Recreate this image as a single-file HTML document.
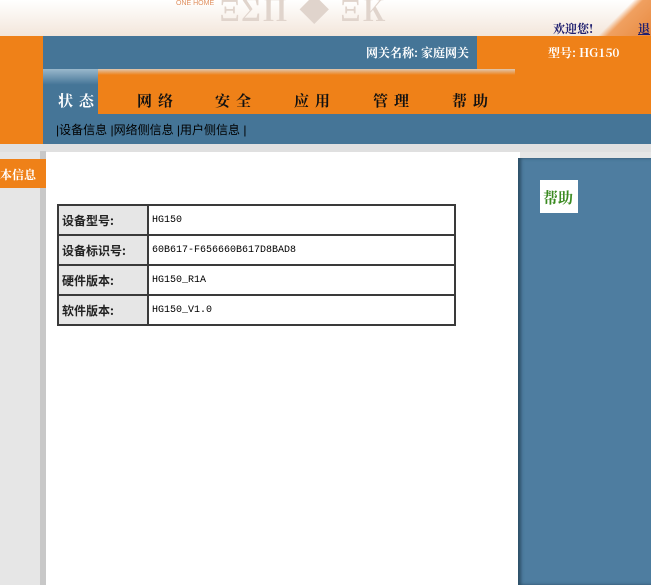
<!DOCTYPE html>
<html><head><meta charset="utf-8"><style>
body{margin:0;width:651px;height:585px;overflow:hidden;background:#e6e6e6;font-family:"Liberation Sans","Noto Sans CJK SC",sans-serif;position:relative}
div{position:absolute;box-sizing:border-box}
.t{font-family:"Noto Serif CJK SC","Liberation Serif",serif;font-weight:bold}
table{border-collapse:collapse;position:absolute;left:57px;top:204px;width:399px}
tr{height:30px}
td{border:2px solid #3a3a3a;font-size:10px;font-family:"Liberation Mono","Noto Sans CJK SC",monospace;padding:0 0 0 3px}
td.l{background:#e6e6e6;width:85px;font-size:12px;font-family:"Noto Sans CJK SC",sans-serif;font-weight:bold;color:#222}
</style></head><body>
<div style="left:0;top:0;width:651px;height:36px;background:linear-gradient(180deg,#fff 0%,#f3e6da 100%)"></div>
<div style="left:176px;top:0;font-size:7px;color:#e09060">ONE HOME</div>
<div style="left:220px;top:-14px;font-size:30px;color:#e0d4cc;letter-spacing:2px" class="t">ΞΣΠ ◆ ΞΚ</div>
<div style="left:590px;top:0;width:61px;height:36px;background:linear-gradient(135deg,transparent 45%,#f0a060 55%,#e88a40 100%)"></div>
<div class="t" style="left:553px;top:20px;font-size:12px;color:#202070">欢迎您!</div>
<div class="t" style="left:638px;top:20px;font-size:12px;color:#202070;text-decoration:underline">退</div>
<div style="left:0;top:36px;width:651px;height:108px;background:#ef8118"></div>
<div style="left:43px;top:36px;width:434px;height:33px;background:#457597"></div>
<div class="t" style="left:366px;top:44px;font-size:12px;color:#fff">网关名称: 家庭网关</div>
<div class="t" style="left:548px;top:44px;font-size:12px;color:#fff">型号: HG150</div>
<div style="left:97px;top:69px;width:418px;height:6px;background:linear-gradient(180deg,#e0c8b0,#ef8118)"></div>
<div style="left:43px;top:69px;width:55px;height:45px;background:linear-gradient(180deg,#9ab8cc 0%,#457597 35%)"></div>
<div class="t" style="left:58px;top:90px;font-size:15px;color:#fff;letter-spacing:6px">状态</div>
<div class="t" style="left:137px;top:90px;font-size:15px;color:#111;letter-spacing:6px">网络</div>
<div class="t" style="left:215px;top:90px;font-size:15px;color:#111;letter-spacing:6px">安全</div>
<div class="t" style="left:294px;top:90px;font-size:15px;color:#111;letter-spacing:6px">应用</div>
<div class="t" style="left:373px;top:90px;font-size:15px;color:#111;letter-spacing:6px">管理</div>
<div class="t" style="left:452px;top:90px;font-size:15px;color:#111;letter-spacing:6px">帮助</div>
<div style="left:43px;top:114px;width:608px;height:30px;background:#457597"></div>
<div style="left:56px;top:121px;font-size:12px;color:#000">|设备信息 |网络侧信息 |用户侧信息 |</div>
<div style="left:0;top:144px;width:651px;height:8px;background:#e0e0e0"></div>
<div style="left:40px;top:151px;width:6px;height:434px;background:#c8c8c8"></div>
<div style="left:46px;top:152px;width:474px;height:433px;background:#fff"></div>
<div style="left:0;top:159px;width:46px;height:29px;background:#ef8118"></div>
<div class="t" style="left:0;top:166px;font-size:12px;color:#fff">本信息</div>
<div style="left:518px;top:158px;width:133px;height:427px;background:#4e7da0;box-shadow:inset 3px 0 3px #2d4f66"></div>
<div style="left:540px;top:180px;width:38px;height:33px;background:#fff"></div>
<div class="t" style="left:543px;top:187px;font-size:15px;color:#3a8a20">帮助</div>
<table>
<tr><td class="l">设备型号:</td><td>HG150</td></tr>
<tr><td class="l">设备标识号:</td><td>60B617-F656660B617D8BAD8</td></tr>
<tr><td class="l">硬件版本:</td><td>HG150_R1A</td></tr>
<tr><td class="l">软件版本:</td><td>HG150_V1.0</td></tr>
</table>
</body></html>
